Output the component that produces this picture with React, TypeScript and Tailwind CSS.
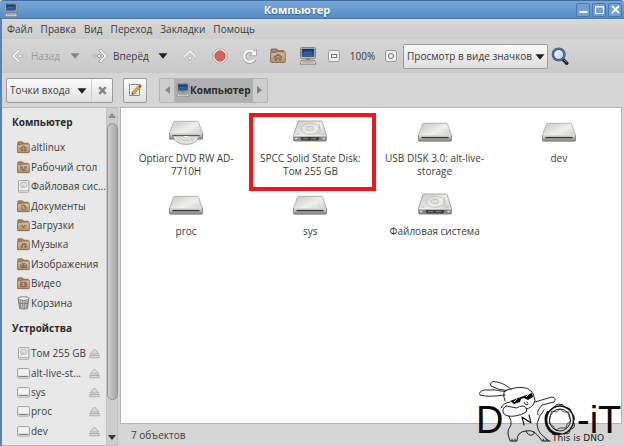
import type { ReactNode } from "react";

type FolderKind = "home" | "desktop" | "documents" | "downloads" | "music" | "pictures" | "video";

function Gradients() {
  return (
    <svg className="absolute size-0" aria-hidden="true">
      <defs>
        <linearGradient id="metal" x1="0" y1="0" x2="1" y2="1">
          <stop offset="0" stopColor="#c6c6c4" />
          <stop offset="0.5" stopColor="#efefed" />
          <stop offset="1" stopColor="#c0c0be" />
        </linearGradient>
        <linearGradient id="front" x1="0" y1="0" x2="0" y2="1">
          <stop offset="0" stopColor="#dededc" />
          <stop offset="1" stopColor="#7c7c7a" />
        </linearGradient>
        <linearGradient id="folder" x1="0" y1="0" x2="0" y2="1">
          <stop offset="0" stopColor="#d6bd9e" />
          <stop offset="1" stopColor="#b09272" />
        </linearGradient>
        <linearGradient id="screen" x1="0" y1="0" x2="0" y2="1">
          <stop offset="0" stopColor="#12356f" />
          <stop offset="1" stopColor="#2f66b0" />
        </linearGradient>
        <linearGradient id="lens" x1="0" y1="0" x2="1" y2="1">
          <stop offset="0" stopColor="#ffffff" />
          <stop offset="1" stopColor="#b4c8dc" />
        </linearGradient>
      </defs>
    </svg>
  );
}

function ComputerIcon({ className }: { className: string }) {
  return (
    <svg viewBox="0 0 18 18" className={className} aria-hidden="true">
      <rect x="1.5" y="0.6" width="15" height="10.6" rx="1" fill="#d5d3cd" stroke="#77756f" strokeWidth="0.9" />
      <rect x="3" y="2" width="12" height="7.6" fill="url(#screen)" stroke="#0f2850" strokeWidth="0.5" />
      <path d="M4.5 7l2-2 1 1.4 2-1.4 1 1.4 2.5-1.8" stroke="#5f8fcc" strokeWidth="0.6" fill="none" />
      <path d="M7 11.2h4v2H7z" fill="#85837e" />
      <path d="M2.6 13.2h12.8l1.3 2.6v1.4H1.3v-1.4z" fill="#dddbd6" stroke="#777" strokeWidth="0.8" />
      <path d="M3.5 15h11" stroke="#8a8984" strokeWidth="1" />
    </svg>
  );
}

const emblems: Record<FolderKind, ReactNode> = {
  home: <path d="M3.5 9.4 8 6l4.500 3.400M5 9.200 8 7l3 2.200V12H9.300v-2H6.700v2H5z" />,
  desktop: <path d="M4.5 7h2v2h-2zM9.500 7h2v2h-2zM7 10h2v2H7zM4.500 11v1M11.500 11v1" />,
  documents: <path d="M6 12V6.500h3L11 9v3zM9 6.500V9h2" />,
  downloads: <path d="m4.500 7.500 3.500 3.500 3.500-3.500M6 7.500 8 9.500l2-2" />,
  music: <path d="M6.500 11V7h4.500v4M6.500 8.200H11M5 11.400h1.500V10H5zM9.500 11.400H11V10H9.500z" />,
  pictures: <path d="M4.500 11.800V8.500L6 7h4l1.500 1.500v3.300zM6.500 11.800V9h3v2.800M8 7v5" />,
  video: <path d="M4.500 6.500h7v5.500h-7zM6.300 6.500V12M9.700 6.500V12M4.500 9.200h1.800M9.700 9.200h1.800" />,
};

function FolderIcon({ kind, className }: { kind: FolderKind; className: string }) {
  return (
    <svg viewBox="0 0 16 16" className={className} aria-hidden="true">
      <path d="M1 3V1.8Q1 1 1.8 1h5l1.4 1.7h5q.8 0 .8.8V14H1z" fill="#a48663" stroke="#74593c" strokeWidth="0.8" />
      <path d="M.7 13.6V5.3q0-.8.8-.8h4L6.8 3.8h7.7q.8 0 .8.8v9q0 .8-.8.8h-13q-.8 0-.8-.8z" fill="url(#folder)" stroke="#7f6344" strokeWidth="0.8" />
      <g fill="none" stroke="#755b40" strokeWidth="0.9">{emblems[kind]}</g>
    </svg>
  );
}

function SmallDisk() {
  return (
    <svg viewBox="0 0 13 13" className="size-[13px]" aria-hidden="true">
      <rect x="1.5" y="0.6" width="10.4" height="11.6" rx="1.2" fill="#f0f0ee" stroke="#999" strokeWidth="0.9" />
      <ellipse cx="6.7" cy="4.8" rx="3.4" ry="2.7" fill="#dededc" stroke="#aaa" strokeWidth="0.7" />
      <path d="m3.2 9.2 4-3.5M2.5 10.5h8.5" stroke="#b0b0ae" strokeWidth="0.8" />
    </svg>
  );
}

function SmallDrive() {
  return (
    <svg viewBox="0 0 13 13" className="size-[13px]" aria-hidden="true">
      <rect x="0.6" y="1.6" width="11.8" height="9.4" rx="1" fill="#f3f3f1" stroke="#969694" strokeWidth="0.9" />
      <path d="M1 8.4h11v2.3H1z" fill="#cfcfcd" />
      <path d="M2.2 9.5h8.6" stroke="#777" strokeWidth="0.9" />
    </svg>
  );
}

function TrashIcon() {
  return (
    <svg viewBox="0 0 13 14" className="h-3.5 w-[13px]" aria-hidden="true">
      <path d="m1.2 2.4 1.3 10q4 1.6 8 0l1.3-10z" fill="#c9c9c7" stroke="#707070" strokeWidth="0.9" />
      <path d="m3 5 .8 7M5.6 5l.3 7.6M8 5l-.5 7.6M10.4 5l-.8 7M2 7.5h9" stroke="#777" strokeWidth="0.8" />
      <ellipse cx="6.5" cy="2.5" rx="5.6" ry="1.8" fill="#f4f4f2" stroke="#707070" strokeWidth="0.9" />
    </svg>
  );
}

function EjectIcon() {
  return (
    <svg viewBox="0 0 11 11" className="size-[11px]" aria-hidden="true">
      <path d="M5.5 1 10 6H1z" fill="#dadada" stroke="#a3a3a3" strokeWidth="0.8" />
      <rect x="0.9" y="7.4" width="9.2" height="2.4" fill="#dadada" stroke="#a3a3a3" strokeWidth="0.8" />
    </svg>
  );
}

type DriveKind = "optical" | "hard" | "removable";

function DriveIcon({ kind }: { kind: DriveKind }) {
  if (kind === "hard") {
    return (
      <svg viewBox="0 0 36 26" className="h-[26px] w-9" aria-hidden="true">
        <path d="M6.8 1h22.4q.8 0 1 .8L34.500 15.800v4.700q0 .7-.8.7H2.300q-.8 0-.8-.7v-4.700L5.800 1.800q.2-.8 1-.8z" fill="url(#metal)" stroke="#9a9a98" strokeWidth="0.8" />
        <path d="M1.600 16.300h32.800v4.200q0 .6-.7.6H2.300q-.7 0-.7-.6z" fill="#868684" />
        <path d="M8.500 17h19l-1 3.400h-17z" fill="#3f3f3e" />
        <path d="M11 18.700h5M19 18.700h5" stroke="#8d8d8b" />
        <path d="M2 15.900h32" stroke="#ededeb" />
        <ellipse cx="18" cy="8.800" rx="9" ry="5.600" fill="none" stroke="#bababa" strokeWidth="0.8" />
        <ellipse cx="18" cy="8.500" rx="4" ry="2.200" fill="#dededc" stroke="#b8b8b6" strokeWidth="0.7" />
        <path d="M27 4l1.500 7.500-3 2M4.500 14h3M28.500 14h3" fill="none" stroke="#b5b5b3" strokeWidth="0.8" />
        <path d="M3 18.500h2.500M30.500 18.500H33" stroke="#dcdcda" strokeWidth="1.600" />
      </svg>
    );
  }
  const optical = kind === "optical";
  return (
    <svg viewBox="0 0 36 26" className="h-[26px] w-9" aria-hidden="true">
      <g transform={optical ? "translate(0 -2)" : undefined}>
        <path d="M6.600 3.300h22.800q.8 0 1.100.8L34.500 15.500v5H1.500v-5L5.500 4.100q.3-.8 1.100-.8z" fill="url(#metal)" stroke="#a6a6a4" strokeWidth="0.8" />
        <path d="M1.500 15.500h33v4.900q0 .9-.9.9H2.400q-.9 0-.9-.9z" fill="url(#front)" stroke="#848482" strokeWidth="0.7" />
        <path d="M2 15.300h32" stroke="#f8f8f6" strokeWidth="0.8" />
        <path d="M4.500 17.600h27" stroke="#353534" strokeWidth="1.300" />
      </g>
      {optical && (
        <g>
          <path d="M5 16h26q-2 8.400-13 8.400T5 16z" fill="#e2e2e0" stroke="#999997" strokeWidth="0.8" />
          <path d="M12 16q0 4.500 6 4.500t6-4.500M9 16l2 5M27 16l-3 5" fill="none" stroke="#c0c0be" strokeWidth="0.8" />
          <path d="M15.500 16q0 2 2.500 2t2.500-2" fill="#fff" stroke="#aaa" strokeWidth="0.5" />
        </g>
      )}
    </svg>
  );
}

function Caret({ className }: { className: string }) {
  return (
    <svg viewBox="0 0 10 6" className={"h-1.5 w-2.5 " + className} fill="currentColor" aria-hidden="true">
      <path d="M.5.3h9L5 5.8z" />
    </svg>
  );
}

const places: { name: string; icon: ReactNode }[] = [
  { name: "altlinux", icon: <FolderIcon kind="home" className="size-[13px]" /> },
  { name: "Рабочий стол", icon: <FolderIcon kind="desktop" className="size-[13px]" /> },
  { name: "Файловая сис...", icon: <SmallDisk /> },
  { name: "Документы", icon: <FolderIcon kind="documents" className="size-[13px]" /> },
  { name: "Загрузки", icon: <FolderIcon kind="downloads" className="size-[13px]" /> },
  { name: "Музыка", icon: <FolderIcon kind="music" className="size-[13px]" /> },
  { name: "Изображения", icon: <FolderIcon kind="pictures" className="size-[13px]" /> },
  { name: "Видео", icon: <FolderIcon kind="video" className="size-[13px]" /> },
  { name: "Корзина", icon: <TrashIcon /> },
];

const devices = ["Том 255 GB", "alt-live-st...", "sys", "proc", "dev"];

const drives: { name: string; kind: DriveKind; marked?: boolean }[] = [
  { name: "Optiarc DVD RW AD-7710H", kind: "optical" },
  { name: "SPCC Solid State Disk: Том 255 GB", kind: "hard", marked: true },
  { name: "USB DISK 3.0: alt-live-storage", kind: "removable" },
  { name: "dev", kind: "removable" },
  { name: "proc", kind: "removable" },
  { name: "sys", kind: "removable" },
  { name: "Файловая система", kind: "hard" },
];

function TitleBar() {
  const button = "flex size-3.5 items-center justify-center rounded-xs border border-[#4a79ae] bg-[#6f9fd3]";
  return (
    <header className="flex h-[19px] shrink-0 items-center rounded-t border-t border-b border-t-[#3f6d9f] border-b-[#4b7bad] bg-linear-to-b from-[#78a7d9] to-[#578cc3] pr-0.5 pl-1">
      <ComputerIcon className="size-3.5" />
      <h1 className="flex-1 text-center text-[11px] font-bold text-white [text-shadow:0_1px_1px_#2f5b8c]">Компьютер</h1>
      <div className="flex w-[46px] justify-end gap-0.5">
        <button aria-label="Свернуть" className={button}>
          <svg viewBox="0 0 9 9" className="size-[9px]"><path d="M.5 7h8" stroke="#fff" strokeWidth="2" /></svg>
        </button>
        <button aria-label="Развернуть" className={button}>
          <svg viewBox="0 0 9 9" className="size-[9px]"><path d="M.5 1.5h8v7h-8zM0 2h9" stroke="#fff" strokeWidth="1.2" fill="none" /></svg>
        </button>
        <button aria-label="Закрыть" className={button}>
          <svg viewBox="0 0 9 9" className="size-[9px]"><path d="m1 1 7 7m0-7L1 8" stroke="#fff" strokeWidth="1.8" /></svg>
        </button>
      </div>
    </header>
  );
}

function Toolbar() {
  return (
    <div className="flex h-[34px] shrink-0 items-center bg-linear-to-b from-[#d6d6d6] to-[#c9c9c9] pl-2">
      <button disabled className="flex w-[58px] items-center gap-1 text-[#9b9b9b]">
        <svg viewBox="0 0 17 16" className="h-4 w-[17px]" aria-hidden="true">
          <path d="M8.5 1 1.5 8l7 7 1.7-1.8L5 8l5.2-5.2z" fill="#efefef" stroke="#b0b0b0" strokeWidth="0.8" />
          <circle cx="10" cy="8" r="1.7" fill="#efefef" stroke="#b0b0b0" strokeWidth="0.8" />
          <circle cx="14.4" cy="8" r="1.4" fill="#efefef" stroke="#b0b0b0" strokeWidth="0.8" />
        </svg>
        Назад
      </button>
      <button disabled aria-label="История назад" className="w-6 pl-0.5"><Caret className="text-[#838383]" /></button>
      <button className="flex w-[66px] items-center gap-1">
        <svg viewBox="0 0 17 16" className="h-4 w-[17px]" aria-hidden="true">
          <path d="m8.5 1 7 7-7 7-1.7-1.8L12 8 6.8 2.8z" fill="#f5f5f5" stroke="#8f8f8f" strokeWidth="0.8" />
          <circle cx="7" cy="8" r="1.7" fill="#f5f5f5" stroke="#8f8f8f" strokeWidth="0.8" />
          <circle cx="2.6" cy="8" r="1.4" fill="#f5f5f5" stroke="#8f8f8f" strokeWidth="0.8" />
        </svg>
        Вперёд
      </button>
      <button aria-label="История вперёд" className="w-6 text-[#222]"><Caret className="" /></button>
      <button disabled aria-label="Вверх" className="w-[30px]">
        <svg viewBox="0 0 16 17" className="h-[17px] w-4">
          <path d="M8 1.5 1.2 8.3l1.6 1.6L8 5l5.2 4.9 1.6-1.6z" fill="#efefef" stroke="#b5b5b5" strokeWidth="0.8" />
          <circle cx="8" cy="10" r="1.7" fill="#efefef" stroke="#b5b5b5" strokeWidth="0.8" />
          <circle cx="8" cy="14.3" r="1.4" fill="#efefef" stroke="#b5b5b5" strokeWidth="0.8" />
        </svg>
      </button>
      <button aria-label="Остановить" className="w-[29px]">
        <svg viewBox="0 0 16 16" className="size-4">
          <path d="M5 1h6l4 4v6l-4 4H5l-4-4V5z" fill="#e8e8e8" stroke="#aaa" strokeWidth="0.8" />
          <circle cx="8" cy="8" r="5.3" fill="#d8605f" stroke="#c04948" strokeWidth="0.6" />
        </svg>
      </button>
      <button aria-label="Обновить" className="w-[29px]">
        <svg viewBox="0 0 17 17" className="size-[17px]" fill="none">
          <path d="M13.5 11.500a5.500 5.500 0 1 1-.8-7" stroke="#999" strokeWidth="4" />
          <path d="M15.500 1v6.700H8.800z" fill="#f7f7f7" stroke="#999" strokeWidth="0.8" />
          <path d="M13.200 11.200a5.500 5.500 0 1 1-.5-6.700" stroke="#f7f7f7" strokeWidth="2.800" />
        </svg>
      </button>
      <button aria-label="Домашняя папка" className="w-[29px]"><FolderIcon kind="home" className="size-4" /></button>
      <button aria-label="Компьютер" className="w-[29px]"><ComputerIcon className="size-[18px]" /></button>
      <button aria-label="Уменьшить" className="flex size-3 items-center justify-center rounded-xs border border-[#9d9d9d] bg-[#f3f3f3]">
        <span className="h-1 w-1.5 border border-[#777]" />
      </button>
      <span className="w-[45px] text-center">100%</span>
      <button aria-label="Увеличить" className="flex size-3 items-center justify-center rounded-xs border border-[#9d9d9d] bg-[#f3f3f3]">
        <span className="size-1.5 rounded-full border border-[#666]" />
      </button>
      <div className="relative ml-1.5">
        <select aria-label="Режим просмотра" className="h-[25px] w-[145px] appearance-none rounded-xs border border-[#9b9b9b] bg-linear-to-b from-[#fafafa] to-[#dedede] pl-[3px]">
          <option>Просмотр в виде значков</option>
        </select>
        <Caret className="pointer-events-none absolute top-[10px] right-[3px] text-[#222]" />
      </div>
      <button aria-label="Поиск" className="ml-[3px]">
        <svg viewBox="0 0 18 18" className="size-[18px]">
          <path d="m11.5 12 4.3 4.3" stroke="#222" strokeWidth="3.4" strokeLinecap="round" />
          <path d="m13 13 3 2.5" stroke="#888" strokeWidth="0.9" />
          <circle cx="7.7" cy="7.5" r="5.8" fill="url(#lens)" stroke="#2b5083" strokeWidth="2.4" />
          <circle cx="7.7" cy="7.5" r="5.9" fill="none" stroke="#6e96c7" strokeWidth="0.7" />
        </svg>
      </button>
    </div>
  );
}

function LocationBar() {
  return (
    <div className="flex h-[34px] shrink-0 items-center bg-[#d5d5d5] pl-1">
      <div className="relative flex h-[25px] w-[107px] rounded-xs border border-[#9b9b9b] bg-linear-to-b from-[#fbfbfb] to-[#e0e0e0]">
        <select aria-label="Боковая панель" className="min-w-0 flex-1 appearance-none pl-[3px]">
          <option>Точки входа</option>
        </select>
        <Caret className="pointer-events-none absolute top-[9px] right-[25px] text-[#222]" />
        <button aria-label="Закрыть панель" className="flex w-[21px] items-center justify-center border-l border-[#d0d0d0]">
          <svg viewBox="0 0 9 9" className="size-[9px]"><path d="m1.2 1.2 6.6 6.6m0-6.6L1.2 7.8" stroke="#858585" strokeWidth="2.4" /></svg>
        </button>
      </div>
      <button aria-label="Изменить адрес" className="ml-2.5 flex h-[25px] w-6 items-center justify-center rounded-xs border border-[#9b9b9b] bg-linear-to-b from-[#fbfbfb] to-[#e0e0e0]">
        <svg viewBox="0 0 14 14" className="size-3.5">
          <path d="M1.5 1.5h10v11h-10z" fill="#fff" stroke="#8a8a8a" />
          <path d="M3 4h6M3 6h4M3 8.5h2M6 10.5h4" stroke="#c5c5c5" strokeWidth="0.7" />
          <path d="m4.4 8.8 6-6 2 2-6 6-2.6.8z" fill="#eca33b" stroke="#9a631a" strokeWidth="0.6" />
          <path d="m10.2 3 1.2-1.2q.6-.5 1.1 0l.9.9q.5.5 0 1.1l-1.2 1.2z" fill="#cf3434" />
          <path d="m3.8 11.6.6-1.8 1.2 1.2z" fill="#333" />
        </svg>
      </button>
      <nav aria-label="Путь" className="ml-3 flex h-[25px] items-stretch rounded-xs border border-[#b5b5b5] bg-[#cecece]">
        <button aria-label="Влево" className="flex w-3.5 items-center justify-center">
          <svg viewBox="0 0 5 8" className="h-2 w-[5px]"><path d="M5 0v8L0 4z" fill="#888" /></svg>
        </button>
        <button className="flex items-center bg-[#b0b0b0] px-0.5 font-bold text-[#2b2b2b]">
          <ComputerIcon className="size-3.5" />
          Компьютер
        </button>
        <button aria-label="Вправо" className="flex w-3.5 items-center justify-center">
          <svg viewBox="0 0 5 8" className="h-2 w-[5px]"><path d="M0 0v8l5-4z" fill="#808080" /></svg>
        </button>
      </nav>
    </div>
  );
}

function Sidebar() {
  return (
    <aside className="flex w-[116px] shrink-0 overflow-hidden border-t border-b border-[#bababa] bg-[#e8e8e8]">
      <div className="min-w-0 flex-1">
        <h2 className="mt-1.5 mb-2 h-4 pl-2.5 leading-4 font-bold text-[#2b2b2b]">Компьютер</h2>
        <ul className="grid h-[175px] auto-rows-fr pl-[15px]">
          {places.map((p) => (
            <li key={p.name} className="flex items-center">
              <a href="#" className="flex items-center gap-px whitespace-nowrap">{p.icon}{p.name}</a>
            </li>
          ))}
        </ul>
        <h2 className="mt-[7px] mb-2 h-4 pl-2.5 leading-4 font-bold text-[#2b2b2b]">Устройства</h2>
        <ul className="grid h-[97px] auto-rows-fr pr-1.5 pl-[15px]">
          {devices.map((name, i) => (
            <li key={name} className="flex items-center justify-between">
              <a href="#" className="flex items-center gap-px whitespace-nowrap">
                {i === 0 ? <SmallDisk /> : <SmallDrive />}
                {name}
              </a>
              <button aria-label={"Извлечь " + name}><EjectIcon /></button>
            </li>
          ))}
        </ul>
      </div>
      <div className="flex w-3 flex-col items-center border-x border-[#c3c3c3] bg-[#cecece]">
        <svg viewBox="0 0 8 5" className="my-[5px] h-[5px] w-2 shrink-0"><path d="m0 5 4-5 4 5z" fill="#8b8b8b" /></svg>
        <div className="w-[11px] flex-[279] rounded-full border border-[#919191] bg-linear-to-r from-[#cfcfcf] to-[#a7a7a7]" />
        <div className="flex-[31]" />
        <svg viewBox="0 0 8 5" className="my-[5px] h-[5px] w-2 shrink-0"><path d="m0 0 4 5 4-5z" fill="#333" /></svg>
      </div>
    </aside>
  );
}

function Mascot() {
  return (
    <svg viewBox="0 0 160 76" className="absolute right-0 bottom-0 h-[76px] w-40" aria-label="DNO-iT, This is DNO">
      <g fontFamily="'Liberation Sans', sans-serif" fontSize="38" fill="#090909">
        <text x="12" y="63">D</text>
        <text x="113" y="63">-iT</text>
      </g>
      <g fill="none" stroke="#111" strokeWidth="0.9" strokeLinejoin="round" strokeLinecap="round">
        <path d="M47 19Q39 12 29 11.500q-4 2-2 4.500 7 4 16 4.500" />
        <path d="M41 21.500Q30 19 20 20q-6 2-4 5 8 2.500 25 0" />
        <path d="M41 31q-2-5-1-9 3-3 7-3 6-2 11-1.500 6 0 9 3.500 3 3 3 6 2 4 0 6-2 5-8 6" />
        <path d="M42 36q-5 3-2 8 3 3 11 2 7-1 11-4 2-5-3-6-4 0-6 2-6-1-11-2" />
        <path d="M71 32l17-5q5 1 2 5L78 35q-6 7-4 10M80 40q-6 7-7 14 1 8 5 11l7 6" />
        <path d="M45 46q3 5 2 9-4 5-3 9l2 7h7q0-5 2-7 3-3 7-3 5-1 8 1 4 3 6 6l2 3h8" />
        <path d="M48 71v-2M51 71v-2M80 71l-1-2M83 71l-1-2M62 61q2 5 6 4 3-1 2-3" />
        <path d="m60 55-2-8 9 6-2-8" strokeWidth="1.1" />
        <path d="M60 32q1 3 3 3 2-1 0-3M37 38q2-5 9-6" />
        <ellipse cx="96" cy="50" rx="13.500" ry="14" strokeWidth="1.500" />
        <ellipse cx="96" cy="50" rx="10.500" ry="11" strokeWidth="0.9" />
        <path d="M83 56q-3-8 1-14M84 58q4 6 11 6" strokeWidth="2.500" />
        <path d="M91 37q1-4 5-2.500 3-1.500 4 2.500M102 38q5-1 5 4M108 44q4 2 1.500 7M110 53q2 4-2 6M106 61q-1 4-5 2.500" />
        <path d="m88 41 4 1 4-3 4 3 5 0 0 5 2 4-4 3-1 4-6 0-4 2-3-4-4-3 1-5z" strokeWidth="0.700" />
      </g>
      <path d="m46 31 22-8 1 4-5 3-4-2-3 1-1 3-6 2z" fill="#0b0b0b" />
      <path d="m50 32 3-3m9-2 3-3" stroke="#fff" strokeWidth="0.8" />
      <text x="88" y="71" fontFamily="'DejaVu Sans', sans-serif" fontSize="9" fill="#222">This is DNO</text>
    </svg>
  );
}

export default function App() {
  return (
    <div className="relative flex min-h-screen flex-col bg-[#d5d5d5] font-['Open_Sans','Noto_Sans',sans-serif] text-[10px] leading-[13px] text-[#3c3c3c]">
      <Gradients />
      <TitleBar />
      <div className="flex min-h-0 flex-1 flex-col border-l-2 border-[#5584b5]">
        <nav aria-label="Меню" className="flex h-5 shrink-0 items-center gap-2 bg-linear-to-b from-[#d8d8d8] to-[#cdcdcd] pl-[5px]">
          {["Файл", "Правка", "Вид", "Переход", "Закладки", "Помощь"].map((m) => (
            <button key={m}>{m}</button>
          ))}
        </nav>
        <Toolbar />
        <LocationBar />
        <div className="flex flex-1 gap-0.5">
          <Sidebar />
          <main className="flex min-w-0 flex-1 flex-col pr-0.5">
            <section className="grid flex-1 auto-rows-[73px] grid-cols-4 content-start border border-[#b5b5b5] bg-white pt-3 pl-[3px]">
              {drives.map((d) => (
                <a key={d.name} href="#" className="relative flex flex-col items-center text-center">
                  <DriveIcon kind={d.kind} />
                  <span className="mt-1.5 px-2">{d.name}</span>
                  {d.marked && <span className="absolute -top-[7px] left-px h-[78px] w-[127px] border-4 border-[#ee1420]" />}
                </a>
              ))}
            </section>
            <footer className="h-[22px] shrink-0 pl-[11px] leading-[22px]">7 объектов</footer>
          </main>
        </div>
      </div>
      <Mascot />
    </div>
  );
}
